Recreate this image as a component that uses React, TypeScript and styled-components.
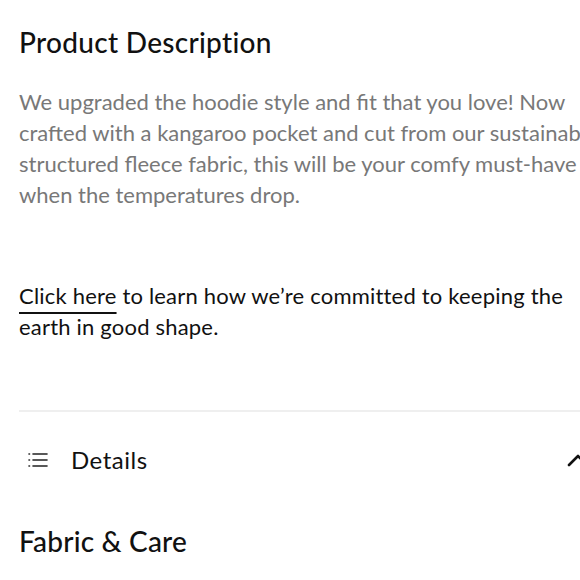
import React from "react";
import styled, { createGlobalStyle } from "styled-components";

const Global = createGlobalStyle`
  html, body { margin: 0; padding: 0; background: #fff; overflow: hidden; }
  body { font-family: "Lato", "Noto Sans", sans-serif; -webkit-font-smoothing: antialiased; }
`;

const Page = styled.div`
  width: 580px;
  height: 580px;
  overflow: hidden;
`;

const Content = styled.div`
  width: 586px;
  padding: 22px 0 0 19px;
  display: flex;
  flex-direction: column;
`;

const Title = styled.h2`
  margin: 0;
  font-size: 28px;
  line-height: 40px;
  font-weight: 500;
  letter-spacing: 0.3px;
  color: #111;
`;

const Paragraph = styled.p<{ $muted?: boolean }>`
  margin: 0;
  font-size: 22px;
  line-height: 31px;
  letter-spacing: ${(p) => (p.$muted ? "0px" : "0.2px")};
  color: ${(p) => (p.$muted ? "#787878" : "#111")};
`;

const Intro = styled(Paragraph)`
  margin-top: 24px;
`;

const Commitment = styled(Paragraph)`
  margin-top: 70px;
`;

const Link = styled.a`
  color: inherit;
  text-decoration: underline;
  text-decoration-thickness: 2px;
  text-underline-offset: 8px;
`;

const Divider = styled.hr`
  margin: 68px 0 0 0;
  border: 0;
  border-top: 2px solid #efefef;
`;

const AccordionHeader = styled.div`
  display: flex;
  align-items: center;
  height: 95px;
  padding: 0 0 0 9px;
`;

const HeaderLabel = styled.span`
  font-size: 24px;
  letter-spacing: 0.5px;
  color: #111;
  margin-left: 23px;
  flex: 1;
`;

const ChevronSlot = styled.span`
  display: flex;
  width: 38px;
`;

const SubTitle = styled.h3`
  margin: 0;
  font-size: 28px;
  line-height: 40px;
  font-weight: 500;
  letter-spacing: 0.2px;
  color: #111;
  margin-top: 14px;
`;

const ListIcon = () => (
  <svg width="20" height="16" viewBox="0 0 20 16" fill="none" stroke="#222" strokeWidth="1.6" strokeLinecap="round">
    <line x1="1" y1="2" x2="1.5" y2="2" />
    <line x1="1" y1="8" x2="1.5" y2="8" />
    <line x1="1" y1="14" x2="1.5" y2="14" />
    <line x1="5" y1="2" x2="19" y2="2" />
    <line x1="5" y1="8" x2="19" y2="8" />
    <line x1="5" y1="14" x2="19" y2="14" />
  </svg>
);

const Chevron = () => (
  <svg width="24" height="14" viewBox="0 0 24 14" fill="none" stroke="#111" strokeWidth="2.6" strokeLinecap="round" strokeLinejoin="round">
    <polyline points="2,12 11,3 20,12" />
  </svg>
);

export default function App() {
  return (
    <Page>
      <Global />
      <Content>
        <Title>Product Description</Title>
        <Intro $muted>
          We upgraded the hoodie style and fit that you love! Now crafted with a kangaroo pocket and cut from our sustainable structured fleece fabric, this will be your comfy must-have when the temperatures drop.
        </Intro>
        <Commitment>
          <Link href="#">Click here</Link> to learn how we’re committed to keeping the earth in good shape.
        </Commitment>
        <Divider />
        <AccordionHeader>
          <ListIcon />
          <HeaderLabel>Details</HeaderLabel>
          <ChevronSlot>
            <Chevron />
          </ChevronSlot>
        </AccordionHeader>
        <SubTitle>Fabric &amp; Care</SubTitle>
      </Content>
    </Page>
  );
}
